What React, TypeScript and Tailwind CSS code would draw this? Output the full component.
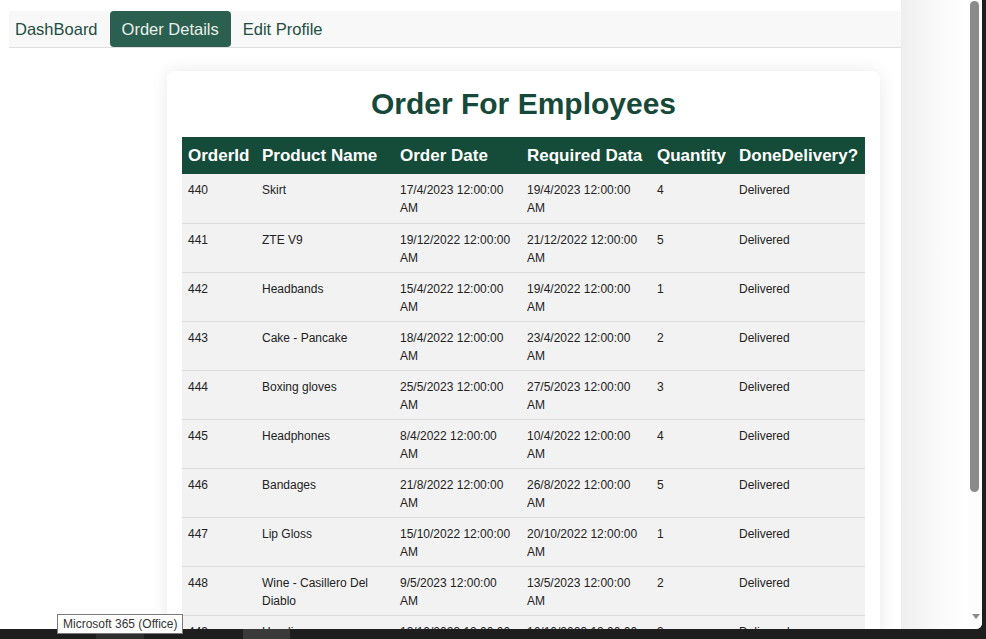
import React from "react";

type Order = {
  id: number;
  product: string;
  orderDate: string;
  requiredDate: string;
  quantity: number;
  status: string;
};

const orders: Order[] = [
  { id: 440, product: "Skirt", orderDate: "17/4/2023", requiredDate: "19/4/2023", quantity: 4, status: "Delivered" },
  { id: 441, product: "ZTE V9", orderDate: "19/12/2022", requiredDate: "21/12/2022", quantity: 5, status: "Delivered" },
  { id: 442, product: "Headbands", orderDate: "15/4/2022", requiredDate: "19/4/2022", quantity: 1, status: "Delivered" },
  { id: 443, product: "Cake - Pancake", orderDate: "18/4/2022", requiredDate: "23/4/2022", quantity: 2, status: "Delivered" },
  { id: 444, product: "Boxing gloves", orderDate: "25/5/2023", requiredDate: "27/5/2023", quantity: 3, status: "Delivered" },
  { id: 445, product: "Headphones", orderDate: "8/4/2022", requiredDate: "10/4/2022", quantity: 4, status: "Delivered" },
  { id: 446, product: "Bandages", orderDate: "21/8/2022", requiredDate: "26/8/2022", quantity: 5, status: "Delivered" },
  { id: 447, product: "Lip Gloss", orderDate: "15/10/2022", requiredDate: "20/10/2022", quantity: 1, status: "Delivered" },
  { id: 448, product: "Wine - Casillero Del Diablo", orderDate: "9/5/2023", requiredDate: "13/5/2023", quantity: 2, status: "Delivered" },
  { id: 449, product: "Hoodie", orderDate: "13/10/2023", requiredDate: "16/10/2023", quantity: 3, status: "Delivered" },
];

const headers = ["OrderId", "Product Name", "Order Date", "Required Data", "Quantity", "DoneDelivery?"];
const colWidths = ["w-[74px]", "w-[138px]", "w-[127px]", "w-[130px]", "w-[82px]", "w-[132px]"];

function NavBar() {
  return (
    <nav className="flex h-[37px] items-stretch border-b border-[#dedede] bg-[#f8f8f8] text-[16.5px]">
      <a className="flex items-center pl-[6px] pr-[12px] text-[#1f4e3f]">DashBoard</a>
      <a className="flex items-center rounded-[4px] bg-[#2b5f4f] px-[12px] text-[#e8f0eb]">Order Details</a>
      <a className="flex items-center px-[12px] text-[#1f4e3f]">Edit Profile</a>
    </nav>
  );
}

function OrdersCard() {
  return (
    <div className="ml-[158px] mt-[23px] w-[713px] rounded-[8px] bg-white px-[15px] pt-[16px] shadow-[0_0_18px_rgba(0,0,0,0.09)]">
      <h1 className="mb-[16px] text-center text-[30px] font-bold leading-[34px] text-[#17493a]">
        Order For Employees
      </h1>
      <table className="w-[683px] table-fixed border-collapse">
        <colgroup>
          {colWidths.map((w, i) => (
            <col key={i} className={w} />
          ))}
        </colgroup>
        <thead>
          <tr className="h-[37px] bg-[#144b39]">
            {headers.map((h) => (
              <th key={h} className="whitespace-nowrap px-[6px] text-left text-[17px] font-bold text-white">
                {h}
              </th>
            ))}
          </tr>
        </thead>
        <tbody>
          {orders.map((o) => (
            <tr key={o.id} className="h-[49px] border-b border-[#dadada] bg-[#f2f2f2] align-top text-[12px] leading-[18px] text-[#222]">
              <td className="px-[6px] pb-[5px] pt-[7px]">{o.id}</td>
              <td className="px-[6px] pb-[5px] pt-[7px]">{o.product}</td>
              <td className="px-[6px] pb-[5px] pt-[7px]">{o.orderDate} 12:00:00 AM</td>
              <td className="px-[6px] pb-[5px] pt-[7px]">{o.requiredDate} 12:00:00 AM</td>
              <td className="px-[6px] pb-[5px] pt-[7px]">{o.quantity}</td>
              <td className="px-[6px] pb-[5px] pt-[7px]">{o.status}</td>
            </tr>
          ))}
        </tbody>
      </table>
    </div>
  );
}

function Scrollbar() {
  return (
    <div className="flex w-[14px] flex-col items-center bg-[#fdfdfd] pt-[1px]">
      <div className="ml-[2px] mr-auto h-[491px] w-[9px] rounded-full bg-[#8a8a8a]" />
      <div className="flex-1" />
      <div className="mb-[10px] ml-[1px] h-0 w-0 border-x-[4px] border-t-[5px] border-x-transparent border-t-[#8a8a8a]" />
    </div>
  );
}

export default function App() {
  return (
    <div
      className="relative flex h-[639px] w-[986px] flex-col overflow-hidden bg-[#1e1e1e]"
      style={{ fontFamily: '"Liberation Sans", Arial, sans-serif' }}
    >
      <div className="flex h-[629px]">
        <div className="flex w-[982px] overflow-hidden rounded-br-[6px] bg-white">
          <div className="flex w-[968px]">
            <div className="w-[901px] pl-[9px] pt-[11px]">
              <NavBar />
              <OrdersCard />
            </div>
            <div className="flex-1 bg-gradient-to-r from-[#eeeeee] via-[#f9f9f9] to-white" />
          </div>
          <Scrollbar />
        </div>
      </div>

      <div className="flex h-[10px]">
        <div className="ml-[96px] w-[48px] bg-[#2f2f2f]" />
        <div className="ml-[99px] w-[47px] bg-[#3a3a3a]" />
      </div>

      <div className="absolute left-[57px] top-[614px] flex h-[20px] items-center border border-[#7a7a7a] bg-white px-[5px] text-[12px] text-[#333]">
        Microsoft 365 (Office)
      </div>
    </div>
  );
}
